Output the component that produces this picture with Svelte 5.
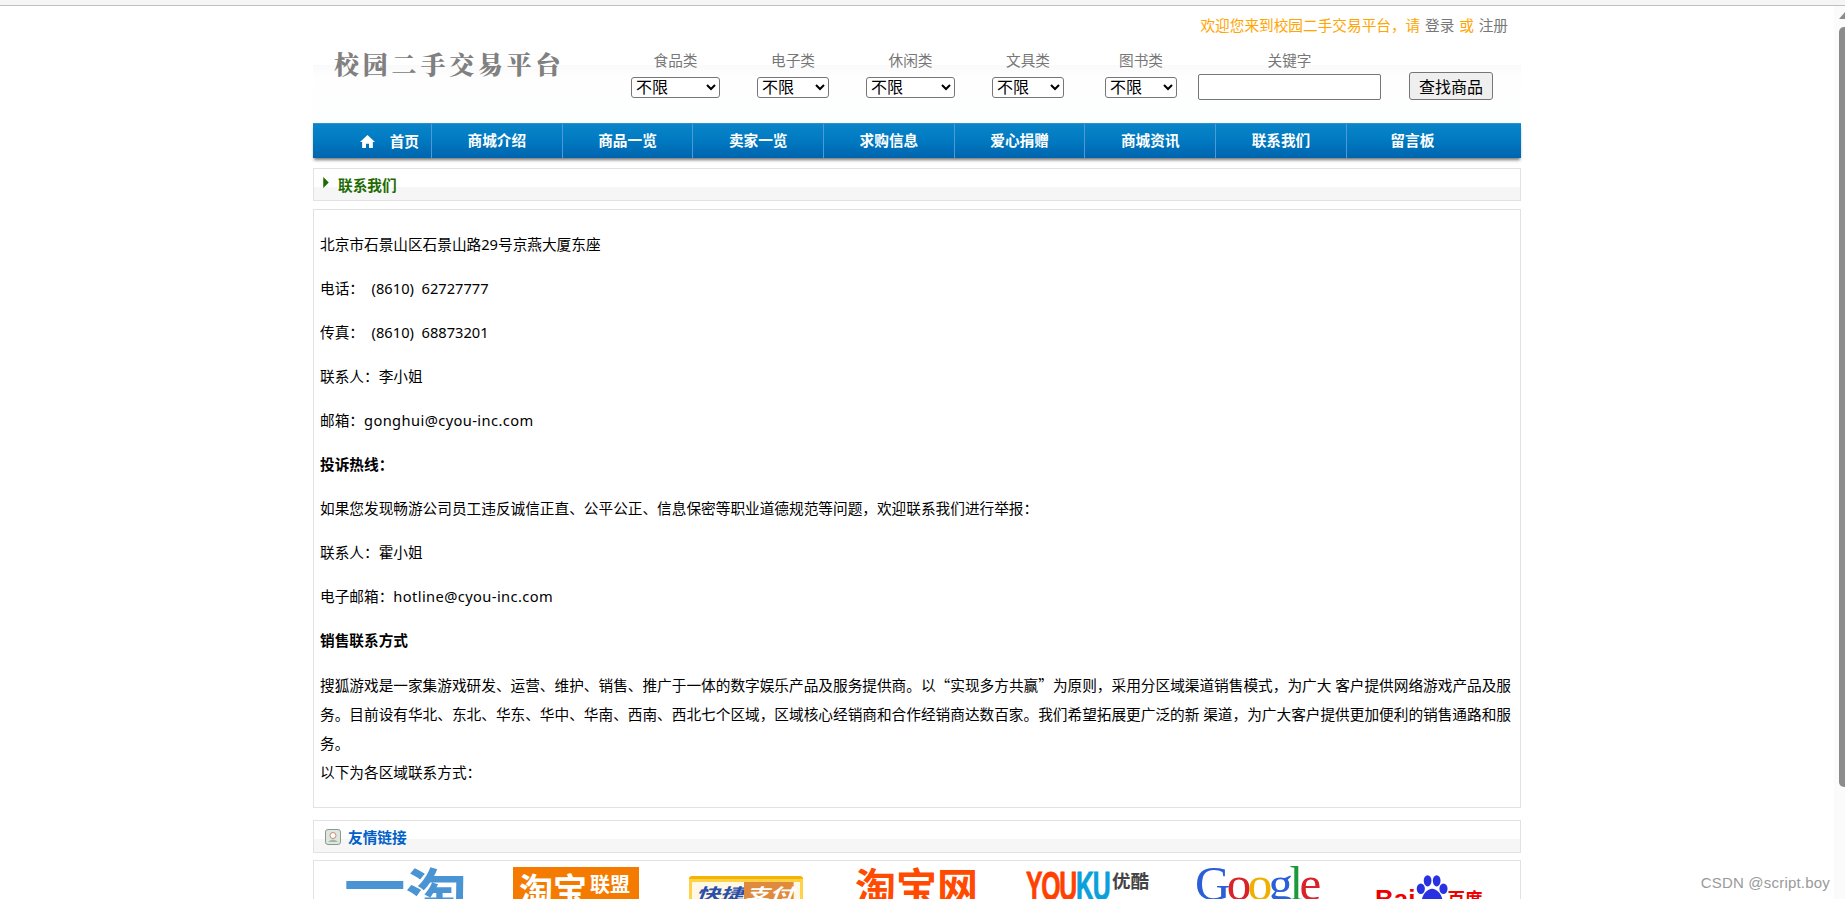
<script>
  const cats = [
    { label: '食品类', w: 89, gap: 0 },
    { label: '电子类', w: 72, gap: 37 },
    { label: '休闲类', w: 89, gap: 37 },
    { label: '文具类', w: 72, gap: 37 },
    { label: '图书类', w: 72, gap: 41 }
  ];
  const nav = ['商城介绍', '商品一览', '卖家一览', '求购信息', '爱心捐赠', '商城资讯', '联系我们'];
</script>

<div class="topline"></div>
<div class="scrollbar"><span class="arrow"></span><span class="thumb"></span></div>

<div class="page">
  <header class="header">
    <div class="welcome">欢迎您来到校园二手交易平台，请 <a href="#a">登录</a> 或 <a href="#a">注册</a></div>
    <div class="head-row">
      <div class="logo">校园二手交易平台</div>
      <form class="search">
        {#each cats as c}
          <div class="field" style="width:{c.w}px;margin-left:{c.gap}px">
            <span class="flabel">{c.label}</span>
            <select style="width:{c.w}px"><option>不限</option></select>
          </div>
        {/each}
        <div class="field kw">
          <span class="flabel">关键字</span>
          <input type="text" />
        </div>
        <button type="button">查找商品</button>
      </form>
    </div>
  </header>

  <nav class="nav">
    <a class="home" href="#a">
      <svg viewBox="0 0 14 12" width="15" height="13"><path d="M7 0 L14 6.4 L12 6.4 L12 12 L8.4 12 L8.4 8 L5.6 8 L5.6 12 L2 12 L2 6.4 L0 6.4 Z" fill="#fff"/></svg>
      首页
    </a>
    {#each nav as n}<a href="#a">{n}</a>{/each}
    <a class="last" href="#a">留言板</a>
  </nav>

  <div class="titlebox green">
    <svg viewBox="0 0 6 12" width="6" height="11"><path d="M0 0 L6 6 L0 12 Z" fill="#1d6b00"/></svg>
    <span>联系我们</span>
  </div>

  <main class="content">
    <p>北京市石景山区石景山路29号京燕大厦东座</p>
    <p>电话：&nbsp;&nbsp;(8610)&nbsp;&nbsp;62727777</p>
    <p>传真：&nbsp;&nbsp;(8610)&nbsp;&nbsp;68873201</p>
    <p>联系人：李小姐</p>
    <p>邮箱：<span class="mail">gonghui@cyou-inc.com</span></p>
    <p><strong>投诉热线：</strong></p>
    <p>如果您发现畅游公司员工违反诚信正直、公平公正、信息保密等职业道德规范等问题，欢迎联系我们进行举报：</p>
    <p>联系人：霍小姐</p>
    <p>电子邮箱：<span class="mail">hotline@cyou-inc.com</span></p>
    <p><strong>销售联系方式</strong></p>
    <p>搜狐游戏是一家集游戏研发、运营、维护、销售、推广于一体的数字娱乐产品及服务提供商。以<span class="q">“</span>实现多方共赢<span class="q">”</span>为原则，采用分区域渠道销售模式，为广大 客户提供网络游戏产品及服务。目前设有华北、东北、华东、华中、华南、西南、西北七个区域，区域核心经销商和合作经销商达数百家。我们希望拓展更广泛的新 渠道，为广大客户提供更加便利的销售通路和服务。<br />以下为各区域联系方式：</p>
  </main>

  <div class="titlebox blue">
    <svg viewBox="0 0 16 16" width="16" height="16"><rect x=".5" y=".5" width="15" height="15" rx="2.5" fill="#dfe5df" stroke="#8a9a90"/><circle cx="8" cy="6.5" r="3" fill="#fff" stroke="#c98a70"/><path d="M3 13 Q8 8 13 13 Z" fill="#9fb8a8"/></svg>
    <span>友情链接</span>
  </div>

  <div class="links">
    <div class="lnk yitao"><span class="yi">一</span><span>淘</span></div>
    <div class="lnk tbunion"><b>淘宝</b><small>联盟</small></div>
    <div class="lnk kuaijie"><span class="band"><span class="kj">快捷<em>支付</em></span></span></div>
    <div class="lnk taobao">淘宝网</div>
    <div class="lnk youku"><span class="yk"><b>YOU</b><i>KU</i></span><small>优酷</small></div>
    <div class="lnk google"><b>G</b><i>o</i><u>o</u><b>g</b><s>l</s><i>e</i></div>
    <div class="lnk baidu"><b>Bai</b><svg viewBox="0 0 30 30" width="34" height="34"><g fill="#2932e1"><ellipse cx="6" cy="13" rx="3.6" ry="4.6"/><ellipse cx="12" cy="6" rx="3.4" ry="5"/><ellipse cx="20" cy="6" rx="3.4" ry="5"/><ellipse cx="26" cy="13" rx="3.6" ry="4.6"/><path d="M16 13 C11 13 6 20 7 25 C9 30 23 30 25 25 C26 20 21 13 16 13 Z"/></g></svg><small>百度</small></div>
  </div>
</div>

<div class="mark">CSDN @script.boy</div>

<style>
  :global(html), :global(body) { margin: 0; height: 899px; overflow: hidden; background: #fff; }
  .topline { height: 5px; background: #f5f5f5; border-bottom: 1px solid #c0c0c0; }
  .scrollbar { position: absolute; right: 0; top: 6px; bottom: 0; width: 11px; background: #fbfbfb; display: flex; flex-direction: column; align-items: flex-end; }
  .arrow { width: 0; height: 0; margin-top: 6px; border-left: 6px solid transparent; border-bottom: 7px solid #8c8c8c; }
  .thumb { width: 6px; flex: none; height: 760px; margin-top: 8px; background: #8c8c8c; border-radius: 5px 0 0 5px; }
  .page { width: 1208px; margin-left: 313px; font-family: "Noto Sans", "Noto Sans CJK SC", sans-serif; font-size: 14.67px; color: #000; }
  .header { height: 117px; background: linear-gradient(#fff 0 59px, #fafafa 59px, #fefefe 72px, #fdfffe 100%); position: relative; }
  .welcome { position: absolute; right: 13px; top: 9px; color: #ffa500; line-height: 20px; word-spacing: 1px; }
  .welcome a { color: #777; text-decoration: none; }
  .head-row { display: flex; padding-top: 44px; }
  .logo { width: 318px; margin-top: -2px; padding-left: 21px; box-sizing: border-box; font-family: "Noto Serif CJK SC", "Noto Sans CJK SC", sans-serif; font-weight: 900; font-size: 25px; letter-spacing: 3.8px; color: #808080; line-height: 30px; white-space: nowrap; }
  .search { display: flex; align-items: flex-start; }
  .field { display: flex; flex-direction: column; align-items: center; flex: none; }
  .flabel { color: #777; line-height: 20px; height: 27px; }
  select { font: 16px "Liberation Sans", "Noto Sans CJK SC", sans-serif; box-sizing: border-box; height: 21px; background: #fff; border: 1px solid #767676; border-radius: 3px; padding: 0; color: #000; }
  .field.kw { width: 183px; margin-left: 21px; }
  input { box-sizing: border-box; width: 183px; height: 26px; margin: -3px 0 0; border: 1px solid #767676; border-radius: 2px; background: #fff; padding: 0; }
  button { font: 16px/26px "Noto Sans CJK SC", sans-serif; height: 28px; width: 84px; margin: 22px 0 0 28px; padding: 0; background: #efefef; border: 1px solid #767676; border-radius: 3px; color: #000; }
  .nav { display: flex; height: 34px; background: linear-gradient(#0a85c9 0, #0079c0 50%, #0064ae 100%); box-shadow: 0 3px 3px -1px #777; border-top: 1px solid #2a93cc; }
  .nav a { flex: none; width: 129.7px; border-right: 1px solid #4d9ad6; color: #fff; font-weight: 700; line-height: 33px; text-align: center; text-decoration: none; }
  .nav a.home { width: 119px; padding-right: 12px; box-sizing: border-box; display: flex; justify-content: flex-end; align-items: center; gap: 15px; }
  .nav a.last { border: 0; width: 131px; }
  .titlebox { height: 33px; box-sizing: border-box; border: 1px solid #e2e2e2; background: linear-gradient(#fff 0 58%, #f6f6f6 58%); display: flex; align-items: center; font-weight: 700; }
  .titlebox.green { margin-top: 10px; padding-left: 9px; gap: 9px; color: #1d6b00; }
  .titlebox.green svg { margin-top: -5px; }
  .titlebox.blue { margin-top: 12px; padding-left: 11px; gap: 7px; color: #0060c8; }
  .content { margin-top: 8px; height: 599px; box-sizing: border-box; border: 1px solid #e2e2e2; padding: 5px 6px 0; overflow: hidden; }
  .content p { margin: 14.67px 0; line-height: 29.33px; }
  .mail { letter-spacing: .4px; }
  .q { font-family: "Noto Sans CJK SC", sans-serif; }
  .links { margin-top: 7px; height: 39px; border: 1px solid #e2e2e2; border-bottom: 0; box-sizing: border-box; overflow: hidden; display: flex; padding-left: 30px; }
  .lnk { flex: none; white-space: nowrap; line-height: 1; height: 60px; box-sizing: border-box; }
  .yitao { width: 169px; color: #4a94d4; font: 700 61.5px/62px "Noto Sans CJK SC", sans-serif; display: flex; padding-top: 2px; }
  .yi { margin-top: -11px; }
  .tbunion { width: 126px; margin: 6px 50px 0 0; padding: 3px 0 0 6px; background: #f57b00; color: #fff; display: flex; align-items: flex-start; }
  .tbunion b { font: 700 34px/38px "Noto Sans CJK SC", sans-serif; }
  .tbunion small { font: 700 20px/28px "Noto Sans CJK SC", sans-serif; margin-left: 3px; }
  .kuaijie { width: 114px; margin: 15px 52px 0 0; background: #ffd24a; border-radius: 3px 3px 0 0; border-top: 3px solid #f5b400; padding-top: 3px; }
  .band { display: block; height: 30px; margin: 0 3px; background: #fff8e4; overflow: hidden; }
  .kj { display: block; width: 64px; margin: 1px 0 0 4px; color: #2b4ea8; font: italic 700 15px/20px "Noto Sans CJK SC", sans-serif; transform: scaleX(1.6); transform-origin: 0 0; }
  .kj em { background: #e08a3c; color: #fff; padding-left: 1px; }
  .taobao { width: 171px; color: #ff4a00; font: 700 41px/46px "Noto Sans CJK SC", sans-serif; margin-top: 1px; }
  .youku { width: 169px; display: flex; align-items: flex-start; padding-top: 8px; }
  .yk { display: inline-block; width: 86px; font: 700 40px/34px "Liberation Sans", sans-serif; letter-spacing: -2px; -webkit-text-stroke: .8px currentColor; transform: scaleX(.62); transform-origin: 0 0; }
  .youku b { color: #ff4000; }
  .youku i { color: #0aa0dc; font-style: normal; }
  .youku small { color: #444; font: 700 18.5px/22px "Noto Sans CJK SC", sans-serif; }
  .google { width: 180px; font: 49px/46px "Liberation Serif", serif; letter-spacing: -3.6px; }
  .google b { color: #2a5fd8; font-weight: 400; }
  .google i { font-style: normal; color: #d8232a; }
  .google u { text-decoration: none; color: #f0b000; }
  .google s { text-decoration: none; color: #1a9a3a; }
  .baidu { display: flex; align-items: flex-start; padding-top: 13px; color: #e00; }
  .baidu b { font: 700 26px/1 "Liberation Sans", sans-serif; margin-top: 12px; }
  .baidu svg { margin: 0 -1px 0 -1px; }
  .baidu small { font: 700 17.5px/1 "Noto Sans CJK SC", sans-serif; margin-top: 15px; }
  .mark { position: absolute; right: 15px; bottom: 8px; font: 15px "Liberation Sans", sans-serif; letter-spacing: .2px; color: #9a9a9a; }
</style>
